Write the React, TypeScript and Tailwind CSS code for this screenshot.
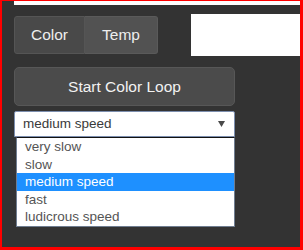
import React from 'react';

const speeds = ['very slow', 'slow', 'medium speed', 'fast', 'ludicrous speed'];

const App: React.FC = () => {
  const selected = 'medium speed';

  return (
    <div
      className="w-[303px] h-[250px] bg-[#333333] border-solid border-[#ff0000] border-l-2 border-t border-r-[3px] border-b-[3px] overflow-hidden"
      style={{ fontFamily: '"Liberation Sans", Arial, sans-serif' }}
    >
      {/* top strip */}
      <div className="h-[4px] ml-[12px] bg-white" />

      {/* tabs + preview */}
      <div className="flex items-start mt-[9px]">
        <div className="flex ml-[12px] mt-[2px] h-[38px]">
          <button className="w-[71px] h-full bg-[#494949] border border-[#555555] rounded-l-[3px] text-[15.5px] text-[#eeeeee]">
            Color
          </button>
          <button className="w-[73px] h-full bg-[#525252] border border-l-0 border-[#5a5a5a] rounded-r-[3px] text-[15.5px] text-[#eeeeee]">
            Temp
          </button>
        </div>
        <div className="ml-auto w-[109px] h-[42px] bg-white" />
      </div>

      {/* loop button */}
      <button className="block mt-[11px] ml-[12px] w-[221px] h-[39px] bg-[#4b4b4b] border border-[#575757] rounded-[5px] text-[15.5px] text-[#f2f2f2]">
        Start Color Loop
      </button>

      {/* select */}
      <div className="mt-[5px] ml-[12px] w-[221px] h-[26px] bg-white border border-[#7c8eae] rounded-t-[2px] flex items-center pl-[8px] pr-[8px]">
        <span className="flex-1 text-[13.5px] text-[#3a3a3a]">{selected}</span>
        <svg width="7" height="6" viewBox="0 0 7 6" className="mr-[1px]">
          <path d="M0 0 H7 L3.5 6 Z" fill="#4a4a4a" />
        </svg>
      </div>

      {/* open list */}
      <div className="ml-[14px] w-[219px] bg-white border border-[#6f7d90] border-t-[#111111]">
        {speeds.map((s) => (
          <div
            key={s}
            className={
              s === selected
                ? 'h-[17.5px] leading-[17.5px] pl-[8px] text-[13.5px] bg-[#1e90ff] text-white'
                : 'h-[17.5px] leading-[17.5px] pl-[8px] text-[13.5px] text-[#555555]'
            }
          >
            {s}
          </div>
        ))}
      </div>
    </div>
  );
};

export default App;
